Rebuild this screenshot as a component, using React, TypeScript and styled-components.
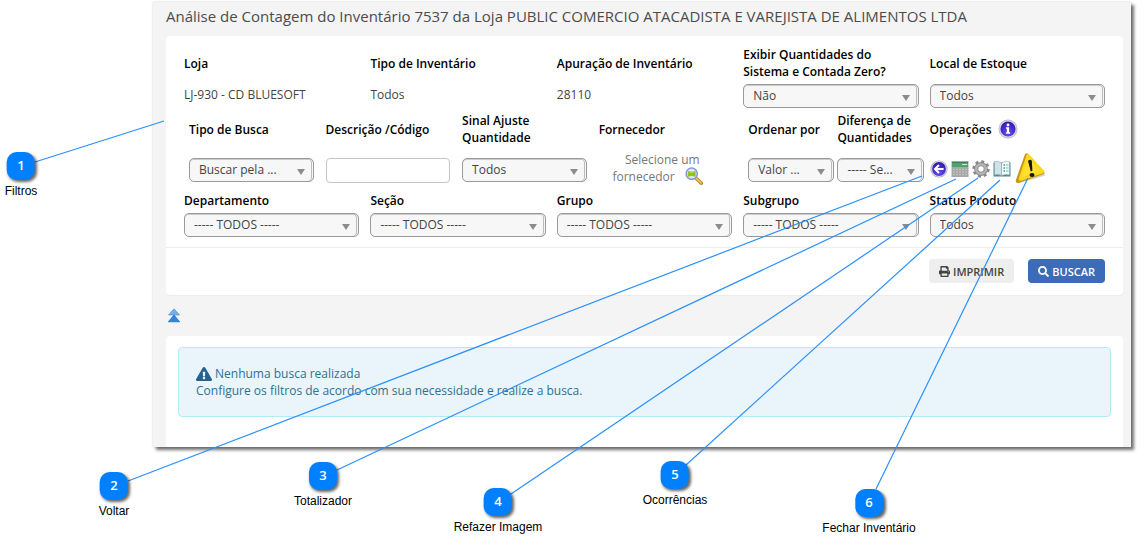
import React from "react";
import styled, { createGlobalStyle, css } from "styled-components";
import { FaPrint, FaSearch, FaExclamationTriangle } from "react-icons/fa";

const GlobalStyle = createGlobalStyle`
  * { box-sizing: border-box; }
  body { margin: 0; background: #fff; }
`;

const Page = styled.div`
  position: relative;
  min-height: 100vh;
  padding: 2px 13px 91px 153px;
  overflow: hidden;
  font: 12px/17px "Open Sans", sans-serif;
  color: #444;
`;

const Frame = styled.main`
  background: #f4f4f4;
  padding: 0 8px 0 13px;
  box-shadow: 3px 3px 3px rgba(0, 0, 0, 0.55), 0 0 2px rgba(0, 0, 0, 0.2);
`;

const Title = styled.h1`
  margin: 0;
  padding: 2px 0 8px;
  font-size: 15px;
  line-height: 24px;
  font-weight: 400;
  color: #4c4c4c;
  white-space: nowrap;
`;

const Panel = styled.form`
  background: #fff;
  border-radius: 4px;
  box-shadow: 0 1px 1px #e9ebf3;
`;

const Filters = styled.div`
  display: grid;
  grid-template-columns: repeat(5, minmax(0, 1fr));
  column-gap: 11px;
  padding: 10px 18px;
  border-bottom: 1px solid #eeeef2;
`;

const SearchGroup = styled.div`
  grid-column: span 3;
  display: grid;
  grid-template-columns: repeat(4, minmax(0, 1fr));
  gap: 12px;
  padding: 0 9px 0 5px;
`;

const OrderGroup = styled.div`
  display: grid;
  grid-template-columns: 1fr 1fr;
  gap: 3px;
  margin: 0 -5px 0 5px;
`;

const Field = styled.div<{ $row: "tall" | "spaced" | "short" }>`
  display: grid;
  min-width: 0;
  grid-template-rows: ${(p) => (p.$row === "short" ? 17 : 34)}px 24px;
  row-gap: ${(p) => (p.$row === "spaced" ? 12 : 4)}px;
  padding-bottom: ${(p) => (p.$row === "tall" ? 4 : p.$row === "spaced" ? 10 : 0)}px;
`;

const labelStyle = css`
  align-self: center;
  font-weight: 600;
  color: #000;
`;
const Label = styled.label`
  ${labelStyle}
`;
const Caption = styled.span`
  ${labelStyle}
`;

const Value = styled.span`
  padding-top: 2px;
`;

const SelectBox = styled.div`
  position: relative;
  height: 24px;
  &::after {
    content: "";
    position: absolute;
    right: 9px;
    top: 11px;
    border: 4px solid transparent;
    border-top: 6px solid #8c8c8c;
    border-bottom: 0;
    pointer-events: none;
  }
`;

const Select = styled.select`
  appearance: none;
  display: block;
  width: 100%;
  height: 24px;
  padding: 0 20px 2px 9px;
  border: 1px solid #999;
  border-radius: 5px;
  background: #f7f7f7;
  box-shadow: inset -1px 0 0 #f7f7f7, inset -2px 0 0 #bbb, inset 0 1px 0 #ccc;
  font: inherit;
  color: #444;
  text-overflow: ellipsis;
`;

const TextInput = styled.input`
  width: 100%;
  height: 25px;
  border: 1px solid #c4c4c4;
  border-radius: 4px;
  background: #fff;
  font: inherit;
`;

const Supplier = styled.div`
  height: 34px;
  margin-top: -7px;
  display: grid;
  grid-template-columns: 84px 18px;
  column-gap: 2px;
  align-items: end;
  color: #777;
`;
const SupplierText = styled.span`
  text-align: right;
  & > span { display: block; padding-right: 8px; white-space: nowrap; }
  & > span:first-child { margin-right: -25px; }
`;

const IconButton = styled.button`
  display: block;
  padding: 0;
  border: 0;
  background: none;
  line-height: 0;
  cursor: pointer;
`;

const OperationsHead = styled.div`
  display: flex;
  align-items: center;
  gap: 6px;
  ${labelStyle}
`;

const Operations = styled.div`
  display: flex;
  align-items: center;
  gap: 3px;
  height: 22px;
`;

const Footer = styled.div`
  display: flex;
  justify-content: flex-end;
  gap: 14px;
  padding: 11px 18px 12px;
`;

const Button = styled.button<{ $primary?: boolean }>`
  display: flex;
  align-items: center;
  gap: 3px;
  height: 24px;
  padding: 1px 10px 0;
  border: 0;
  border-radius: 4px;
  font: 600 11px/17px "Open Sans", sans-serif;
  color: ${(p) => (p.$primary ? "#fff" : "#444")};
  background: ${(p) => (p.$primary ? "#3c6bb8" : "#eee")};
`;

const Collapse = styled.div`
  padding: 13px 0 13px 1px;
`;

const Results = styled.section`
  background: #fff;
  border-radius: 4px 4px 0 0;
  padding: 11px 12px 30px;
`;

const Notice = styled.div`
  padding: 17px;
  border: 1px solid #b2ebf5;
  border-radius: 4px;
  background: #e9f4fb;
  color: #31708f;
  p { margin: 0; display: flex; align-items: center; gap: 3px; }
  svg { color: #27628f; }
`;

const Lines = styled.svg`
  position: absolute;
  inset: 0;
  width: 100%;
  height: 100%;
  pointer-events: none;
`;

const Pin = styled.div`
  position: absolute;
  transform: translateX(-50%);
  display: flex;
  flex-direction: column;
  align-items: center;
  gap: 4px;
  font: 12px/14px "Liberation Sans", Arial, sans-serif;
  color: #000;
  white-space: nowrap;
`;

const Badge = styled.span`
  width: 28px;
  height: 28px;
  border-radius: 10px;
  background: #0080ff;
  box-shadow: 2px 2px 3px rgba(0, 0, 0, 0.6);
  color: #fff;
  font: 600 13px/27px "Open Sans", sans-serif;
  text-align: center;
`;

type DropProps = { label: string; value: string; row: "tall" | "spaced" | "short" };

function Drop({ label, value, row }: DropProps) {
  const id = React.useId();
  return (
    <Field $row={row}>
      <Label htmlFor={id}>{label}</Label>
      <SelectBox>
        <Select id={id}>
          <option>{value}</option>
        </Select>
      </SelectBox>
    </Field>
  );
}

const InfoIcon = () => (
  <svg width="20" height="20" viewBox="0 0 18 18">
    <defs>
      <radialGradient id="violet" cx="50%" cy="75%" r="70%">
        <stop offset="0" stopColor="#6a4df0" />
        <stop offset="1" stopColor="#3318b4" />
      </radialGradient>
    </defs>
    <circle cx="9" cy="9" r="8.5" fill="#b4b4c0" />
    <circle cx="9" cy="9" r="7.9" fill="#dcdce4" />
    <circle cx="9" cy="9" r="6.8" fill="url(#violet)" />
    <circle cx="9" cy="5.4" r="1.3" fill="#fff" />
    <path d="M7.2 7.5H10v4.5h.9v1.2H7.1V12H8V8.7h-.8z" fill="#fff" />
  </svg>
);

const BackIcon = () => (
  <svg width="18" height="18" viewBox="0 0 18 18">
    <circle cx="9" cy="9" r="8.6" fill="#a9a9b4" />
    <circle cx="9" cy="9" r="7.9" fill="#dcdce4" />
    <circle cx="9" cy="9" r="6.9" fill="url(#violet)" />
    <path d="M13.6 9H5.4M9 5 5 9l4 4" fill="none" stroke="#fff" strokeWidth="2" />
  </svg>
);

const CalculatorIcon = () => (
  <svg width="18" height="18" viewBox="0 0 18 18">
    <rect x=".5" y="1" width="17" height="16" fill="#a6a8a6" />
    <rect x="1" y="2" width="16" height="5" fill="#54a070" />
    <path d="M1 2.5h16" stroke="#3d8058" />
    <path d="M11 4.5h5" stroke="#c5f5c5" />
    <path d="M2 9.5h14M2 12h14M2 14.5h14" stroke="#bdbdbd" strokeWidth="1.5" strokeDasharray="2 1" />
  </svg>
);

const GearIcon = () => (
  <svg width="18" height="18" viewBox="0 0 18 18">
    <circle cx="9" cy="9" r="7.3" fill="none" stroke="#898989" strokeWidth="2.8" strokeDasharray="2.9 2.83" />
    <circle cx="9" cy="9" r="4.8" fill="none" stroke="#8a8a8a" strokeWidth="4.2" />
    <circle cx="9" cy="9" r="4.8" fill="none" stroke="#b4b4b4" strokeWidth="2.6" />
  </svg>
);

const BookIcon = () => (
  <svg width="18" height="18" viewBox="0 0 18 18">
    <path d="M.5 2.5h17v14h-17z" fill="#4d8795" />
    <path d="M1.5 1.5Q6 .5 8.5 3v12.5Q5 14 1.5 15z" fill="#cfe3e8" stroke="#83aab3" strokeWidth=".6" />
    <path d="M16.5 1.5Q12 .5 8.5 3v12.5Q13 14 16.5 15z" fill="#f2fafa" stroke="#83aab3" strokeWidth=".6" />
    <path d="M10.5 5h1.5M10.5 8h1.5M10.5 11h1.5" stroke="#4c9b70" strokeWidth="1.5" />
    <path d="M13 5h2.5M13 8h2.5M13 11h2.5" stroke="#7db4e0" />
  </svg>
);

const WarningIcon = () => (
  <svg width="32" height="32" viewBox="0 0 32 32">
    <path d="M4 30.5 31 22.5l-1-3-24 8z" fill="#777" opacity=".35" />
    <path d="M11 1.2Q12 -.4 14.3 1L30 18.2Q31.4 20.6 28.9 21.2L5 29.8Q1.4 30.6 1.8 27.4z" fill="#c99512" />
    <path d="M12.6 1.8Q13.4 .4 15 1.6L29.8 17.8Q30.8 19.6 29 20.2L7 27.8Q4.4 28.2 4.8 25.6z" fill="#ffd91c" />
    <path d="M14.2 5 26 17.8 8 24z" fill="#ffe94d" opacity=".5" />
    <path d="M14 8Q16 5.8 17.8 7.8L18.4 17.8 16.8 18.4z" fill="#16160c" />
    <ellipse cx="18" cy="22" rx="2.5" ry="1.9" fill="#16160c" />
  </svg>
);

const SearchSupplierIcon = () => (
  <svg width="18" height="18" viewBox="0 0 18 18">
    <path d="m11 11 5.3 5.3" stroke="#b98122" strokeWidth="3.4" strokeLinecap="round" />
    <path d="m11 10.8 5 5" stroke="#f5c44f" strokeWidth="1.8" strokeLinecap="round" />
    <circle cx="6.7" cy="6.7" r="5.6" fill="#dcebfa" stroke="#8795cf" strokeWidth="1.5" />
    <path d="M2.8 4.2h7.8v5.4H8.4l-1.7-.8-1.7.8H2.8z" fill="#8fc412" />
    <path d="M5 4.2h3.4v1.4H5z" fill="#c9e88a" />
  </svg>
);

const CollapseIcon = () => (
  <svg width="14" height="15" viewBox="0 0 14 15">
    <path d="M7 .8 12.5 7h-11z" fill="#6fb1ee" stroke="#5794d8" strokeWidth=".7" />
    <path d="M7 7 12.7 13.8H1.3z" fill="#2f86dc" stroke="#2764b4" strokeWidth=".7" />
  </svg>
);

const operations = [
  { name: "Voltar", icon: <BackIcon /> },
  { name: "Totalizador", icon: <CalculatorIcon /> },
  { name: "Refazer Imagem", icon: <GearIcon /> },
  { name: "Ocorrências", icon: <BookIcon /> },
  { name: "Fechar Inventário", icon: <WarningIcon /> },
];

const PAGE_WIDTH = 1144;
const pct = (x: number) => `${(x / PAGE_WIDTH) * 100}%`;

const pins = [
  { n: 1, text: "Filtros", x: 21, y: 152, from: [35, 162], to: [164, 121] },
  { n: 2, text: "Voltar", x: 114, y: 472, from: [128, 481], to: [922, 176] },
  { n: 3, text: "Totalizador", x: 323, y: 462, from: [337, 470], to: [956, 179] },
  { n: 4, text: "Refazer Imagem", x: 498, y: 488, from: [511, 494], to: [978, 178] },
  { n: 5, text: "Ocorrências", x: 675, y: 461, from: [686, 465], to: [1000, 180] },
  { n: 6, text: "Fechar Inventário", x: 869, y: 489, from: [876, 489], to: [1028, 178] },
];

export default function App() {
  const codeId = React.useId();
  return (
    <Page>
      <GlobalStyle />
      <Frame>
        <Title>
          Análise de Contagem do Inventário 7537 da Loja PUBLIC COMERCIO ATACADISTA E VAREJISTA DE ALIMENTOS LTDA
        </Title>
        <Panel onSubmit={(e) => e.preventDefault()}>
          <Filters>
            <Field $row="tall">
              <Caption>Loja</Caption>
              <Value>LJ-930 - CD BLUESOFT</Value>
            </Field>
            <Field $row="tall">
              <Caption>Tipo de Inventário</Caption>
              <Value>Todos</Value>
            </Field>
            <Field $row="tall">
              <Caption>Apuração de Inventário</Caption>
              <Value>28110</Value>
            </Field>
            <Drop row="tall" label="Exibir Quantidades do Sistema e Contada Zero?" value="Não" />
            <Drop row="tall" label="Local de Estoque" value="Todos" />

            <SearchGroup>
              <Drop row="spaced" label="Tipo de Busca" value="Buscar pela ..." />
              <Field $row="spaced">
                <Label htmlFor={codeId}>Descrição /Código</Label>
                <TextInput id={codeId} type="text" />
              </Field>
              <Drop row="spaced" label="Sinal Ajuste Quantidade" value="Todos" />
              <Field $row="spaced">
                <Caption>Fornecedor</Caption>
                <Supplier>
                  <SupplierText>
                    <span>Selecione um</span>
                    <span>fornecedor</span>
                  </SupplierText>
                  <IconButton type="button" aria-label="Selecionar fornecedor">
                    <SearchSupplierIcon />
                  </IconButton>
                </Supplier>
              </Field>
            </SearchGroup>
            <OrderGroup>
              <Drop row="spaced" label="Ordenar por" value="Valor ..." />
              <Drop row="spaced" label="Diferença de Quantidades" value="----- Se..." />
            </OrderGroup>
            <Field $row="spaced">
              <OperationsHead>
                Operações <InfoIcon />
              </OperationsHead>
              <Operations>
                {operations.map((o) => (
                  <IconButton key={o.name} type="button" aria-label={o.name}>
                    {o.icon}
                  </IconButton>
                ))}
              </Operations>
            </Field>

            <Drop row="short" label="Departamento" value="----- TODOS -----" />
            <Drop row="short" label="Seção" value="----- TODOS -----" />
            <Drop row="short" label="Grupo" value="----- TODOS -----" />
            <Drop row="short" label="Subgrupo" value="----- TODOS -----" />
            <Drop row="short" label="Status Produto" value="Todos" />
          </Filters>
          <Footer>
            <Button type="button">
              <FaPrint size={11} /> IMPRIMIR
            </Button>
            <Button type="submit" $primary>
              <FaSearch size={11} /> BUSCAR
            </Button>
          </Footer>
        </Panel>
        <Collapse>
          <IconButton type="button" aria-label="Recolher filtros">
            <CollapseIcon />
          </IconButton>
        </Collapse>
        <Results>
          <Notice>
            <p>
              <FaExclamationTriangle size={16} /> Nenhuma busca realizada
            </p>
            <p>Configure os filtros de acordo com sua necessidade e realize a busca.</p>
          </Notice>
        </Results>
      </Frame>

      <Lines>
        {pins.map((p) => (
          <line
            key={p.n}
            x1={pct(p.from[0])}
            y1={p.from[1]}
            x2={pct(p.to[0])}
            y2={p.to[1]}
            stroke="#2a90ff"
            strokeWidth="1.2"
          />
        ))}
      </Lines>
      {pins.map((p) => (
        <Pin key={p.n} style={{ left: pct(p.x), top: p.y }}>
          <Badge>{p.n}</Badge>
          {p.text}
        </Pin>
      ))}
    </Page>
  );
}
